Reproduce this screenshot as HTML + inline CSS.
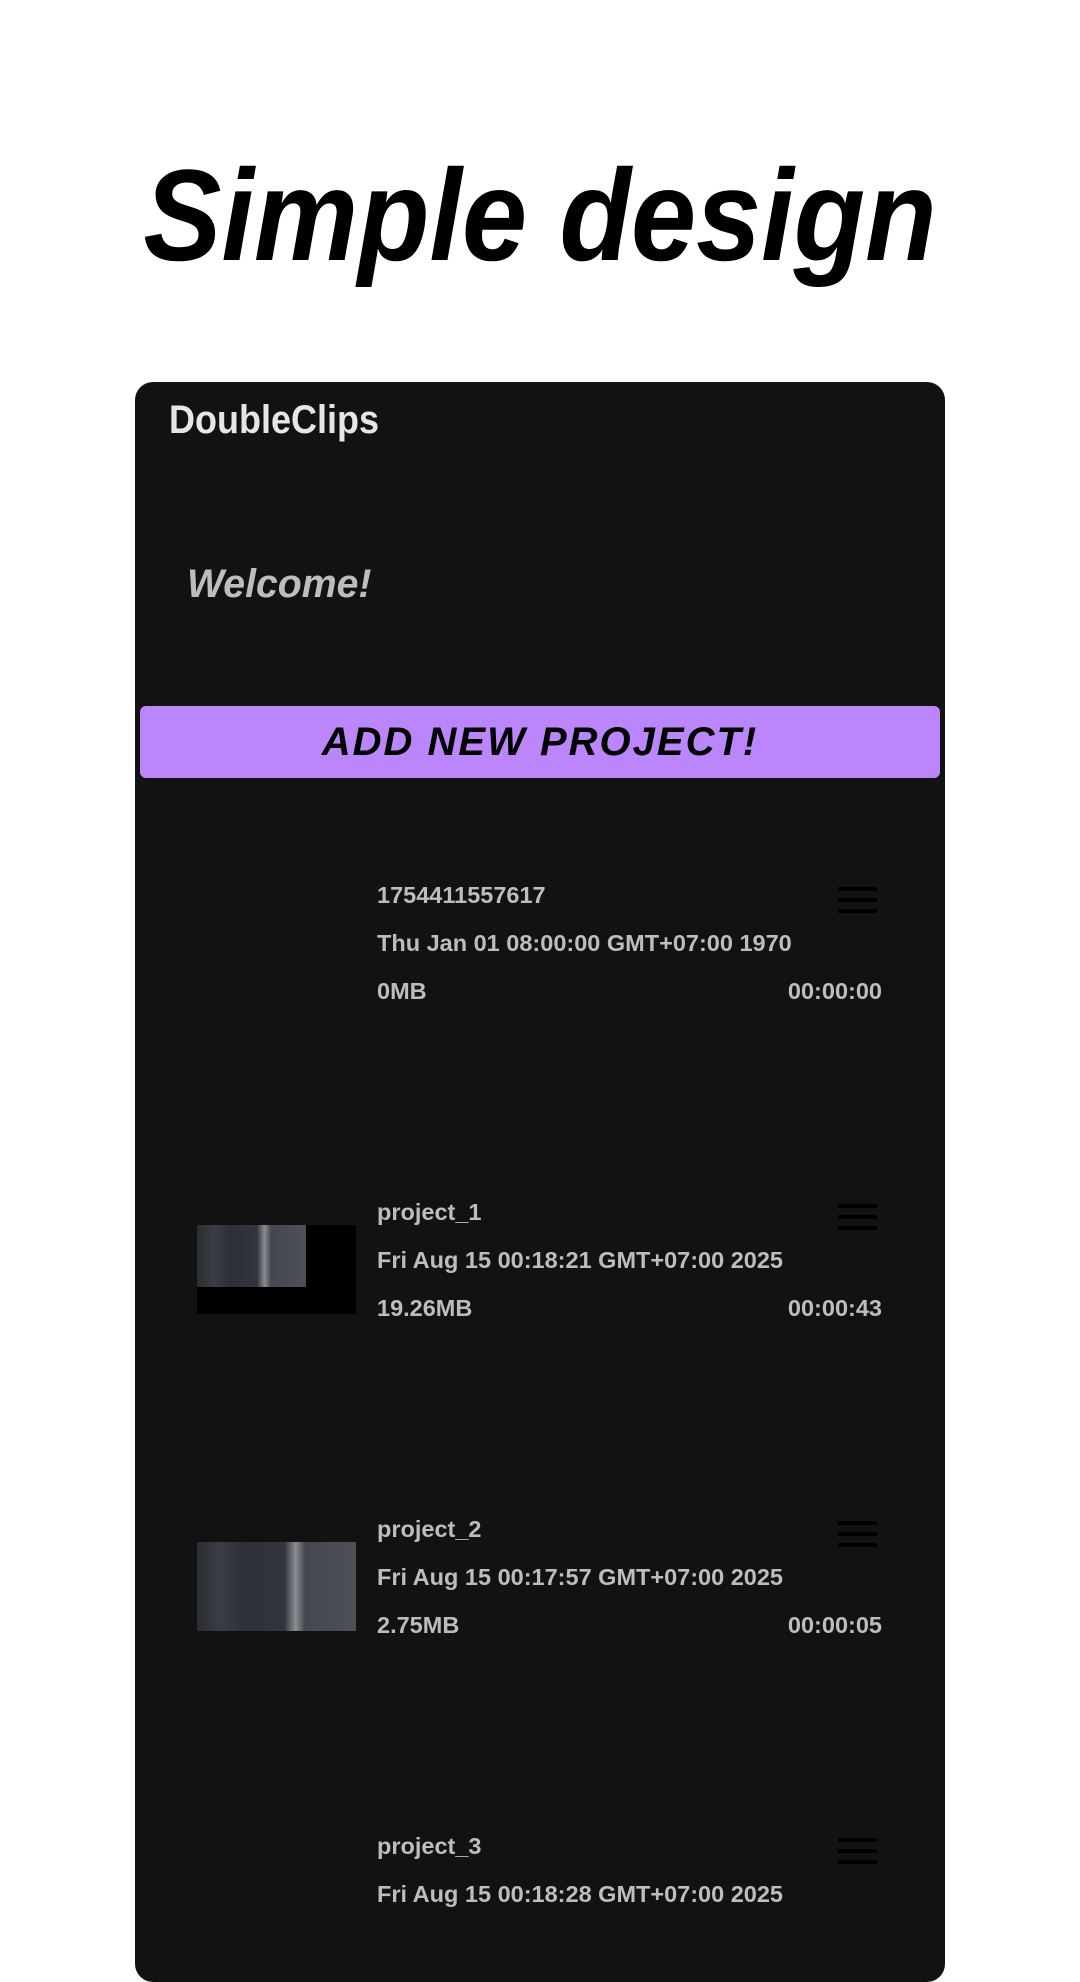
<!DOCTYPE html>
<html><head><meta charset="utf-8"><style>
*{margin:0;padding:0;box-sizing:border-box}
body{width:1080px;height:1920px;background:#fff;position:relative;overflow:hidden;font-family:"Liberation Sans",sans-serif}
.title{position:absolute;left:0;width:1080px;top:140px;text-align:center;font-weight:bold;font-style:italic;font-size:130px;line-height:150px;color:#000;transform:scaleX(0.9);transform-origin:540px 0}
.card{position:absolute;left:135px;top:382px;width:810px;height:1600px;background:#121212;border-radius:18px}
.abs{position:absolute}
.app{left:34px;top:16px;font-size:40px;font-weight:bold;color:#e6e6e6;transform:scaleX(0.9);transform-origin:0 0}
.wel{left:52px;top:180px;font-size:40px;font-weight:bold;font-style:italic;color:#bdbdbd;transform:scaleX(0.98);transform-origin:0 0}
.btn{left:5px;top:324px;width:800px;height:72px;background:#bb86fc;border-radius:6px;text-align:center;font-size:40px;line-height:72px;font-weight:bold;font-style:italic;color:#000;letter-spacing:2px}
.t{font-size:23.5px;font-weight:bold;color:#bdbdbd;white-space:nowrap}
.menu{width:39px;height:26px}
.menu i{display:block;height:4px;background:#000;margin-bottom:7px}
.th{left:62px;width:159px;height:89px;background:#000}
.im{background:linear-gradient(90deg,#2a2d33 0,#3a3d44 15%,#2d3036 30%,#32353b 55%,#8a8d92 62%,#45484e 68%,#4d5056 100%)}
</style></head><body>
<div class="title">Simple design</div>
<div class="card">
<div class="abs app">DoubleClips</div>
<div class="abs wel">Welcome!</div>
<div class="abs btn">ADD NEW PROJECT!</div>

<div class="abs t" style="left:242px;top:500px">1754411557617</div>
<div class="abs t" style="left:242px;top:548px">Thu Jan 01 08:00:00 GMT+07:00 1970</div>
<div class="abs t" style="left:242px;top:596px">0MB</div>
<div class="abs t" style="right:63px;top:596px">00:00:00</div>
<div class="abs menu" style="left:703px;top:505px"><i></i><i></i><i></i></div>

<div class="abs t" style="left:242px;top:817px">project_1</div>
<div class="abs t" style="left:242px;top:865px">Fri Aug 15 00:18:21 GMT+07:00 2025</div>
<div class="abs t" style="left:242px;top:913px">19.26MB</div>
<div class="abs t" style="right:63px;top:913px">00:00:43</div>
<div class="abs menu" style="left:703px;top:822px"><i></i><i></i><i></i></div>
<div class="abs th" style="top:843px"><div class="im" style="width:109px;height:62px"></div></div>

<div class="abs t" style="left:242px;top:1134px">project_2</div>
<div class="abs t" style="left:242px;top:1182px">Fri Aug 15 00:17:57 GMT+07:00 2025</div>
<div class="abs t" style="left:242px;top:1230px">2.75MB</div>
<div class="abs t" style="right:63px;top:1230px">00:00:05</div>
<div class="abs menu" style="left:703px;top:1139px"><i></i><i></i><i></i></div>
<div class="abs th im" style="top:1160px"></div>

<div class="abs t" style="left:242px;top:1451px">project_3</div>
<div class="abs t" style="left:242px;top:1499px">Fri Aug 15 00:18:28 GMT+07:00 2025</div>
<div class="abs menu" style="left:703px;top:1456px"><i></i><i></i><i></i></div>
</div>
</body></html>
